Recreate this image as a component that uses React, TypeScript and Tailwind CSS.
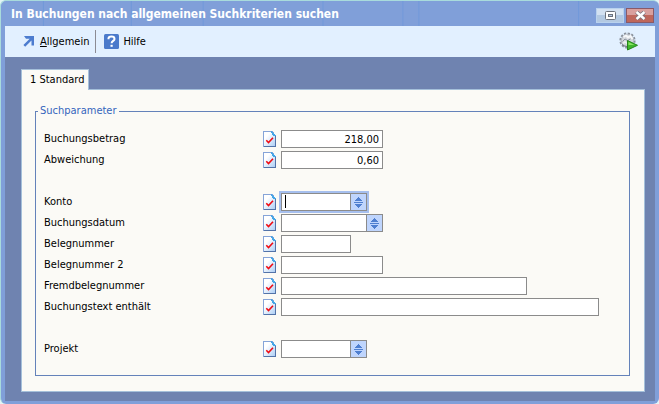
import { useState } from 'react';
import type { ReactNode } from 'react';

// Sheet with a red tick in front of every parameter
const CheckSheet = () => (
  <svg className="block h-4 w-[13px]" viewBox="0 0 13 16" shapeRendering="crispEdges">
    <defs>
      <linearGradient id="sheet" x1="0" y1="0" x2="1" y2="1">
        <stop offset="0.3" stopColor="#ffffff" />
        <stop offset="1" stopColor="#a9ccf5" />
      </linearGradient>
    </defs>
    <path d="M0.5 0.5h8.5l3.5 4v11h-12z" fill="url(#sheet)" stroke="#86a4d8" />
    <path d="M12.5 5v10.5h-12" fill="none" stroke="#5373a8" />
    <path d="M8 0h1v1h1v1h1v1h1v1h1v1h-3v-1h-1v-2h-1z" fill="#45a6e6" />
    <path d="M3.3 9.300l2.200 2.200l4.500-4.700" fill="none" stroke="#f00a12" strokeWidth={1.600} shapeRendering="auto" />
  </svg>
);

const ArrowIcon = () => (
  <svg className="block h-[11px] w-[11px]" viewBox="0 0 11 11" fill="#4c7ccf">
    <path d="M1 0h10v9.500h-2.500v-5l-6.300 6.300l-1.800-1.800l6.300-6.300h-3.700z" />
  </svg>
);

const HelpIcon = () => (
  <svg className="block h-[15px] w-[15px]" viewBox="0 0 15 15">
    <rect width="15" height="15" rx="1.500" fill="#4a7acb" />
    <path d="M4.500 5.200V4.500C4.500 3 5.700 2.500 7.500 2.500S10.500 3.200 10.500 4.900C10.500 6.800 7.600 7 7.600 9.300" fill="none" stroke="#fff" strokeWidth={2} />
    <rect x="6.500" y="10.800" width="2.200" height="2" fill="#fff" />
  </svg>
);

// Gear with a green play arrow, starts the search
const RunIcon = () => (
  <svg className="block h-[19px] w-[20px]" viewBox="0 0 20 19">
    <circle cx="8.500" cy="8.500" r="7" fill="none" stroke="#8b919b" strokeWidth={2.200} strokeDasharray="2.200 1.465" />
    <circle cx="8.500" cy="8.500" r="6.200" fill="#d3d7dd" stroke="#a9afb9" strokeWidth={0.800} />
    <path d="M4.500 5l2.500-1.500l2 2l2.500-1.500l2 3" fill="none" stroke="#f6f8fa" strokeWidth={2} />
    <path d="M3.500 9.500l2.500-2.500l2.500 1.500l3-1.500" fill="none" stroke="#8e95a1" strokeWidth={1} />
    <path d="M4 11.500l2-1.500l2 1.500" fill="none" stroke="#eef1f4" strokeWidth={1.500} />
    <path d="M3 12.500l2.500 1.500l2.500 0.500" fill="none" stroke="#717985" strokeWidth={1} />
    <path d="M8.500 8.500v9.500l10-4.700z" fill="#3fb62b" stroke="#24861a" strokeWidth={1} />
    <path d="M9.500 10l6 3h-6z" fill="#8ae263" />
  </svg>
);

const SpinIcon = () => (
  <svg className="block h-[11px] w-[9px]" viewBox="0 0 9 11" fill="#4f7fd0" shapeRendering="crispEdges">
    <path d="M4 0h1v1h1v1h1v1h1v1h-7v-1h1v-1h1v-1h1z" />
    <path d="M0 5h9v1h-9z" />
    <path d="M1 7h7v1h-1v1h-1v1h-1v1h-1v-1h-1v-1h-1v-1h-1z" />
  </svg>
);

// Thin vertical streaks in the title bar
const TitleStreaks = () => (
  <svg className="absolute inset-0 h-full w-full" viewBox="0 0 659 25" preserveAspectRatio="none">
    <path d="M42.500 0v25M130.500 0v25M202.500 0v25M322.500 0v25M402.500 0v25M418.500 0v25M578.500 0v25" stroke="#7099da" strokeWidth={1} />
  </svg>
);

interface FieldProps {
  id: string;
  label: string;
  width: string;
  value?: string;
  spin?: boolean;
  active?: boolean;
  spaced?: boolean;
}

const Field = ({ id, label, width, value = '', spin = false, active = false, spaced = false }: FieldProps) => {
  const [text, setText] = useState(value);

  return (
    <div className={`flex items-center ${spaced ? 'mt-[21px]' : ''}`}>
      <label htmlFor={id} className="w-[219px] shrink-0">{label}</label>
      <CheckSheet />
      <div
        className={`relative ml-[5px] flex h-[18px] border border-[#8b8b8b] bg-white ${width} ${
          active ? 'ring-2 ring-[#a6bfee]' : ''
        }`}
      >
        <input
          id={id}
          type="text"
          value={text}
          onChange={(e) => setText(e.target.value)}
          className={`h-full w-full min-w-0 bg-transparent px-[3px] outline-none ${value ? 'text-right' : ''}`}
        />
        {active && <span className="absolute left-[3px] top-px h-[13px] w-px bg-black" />}
        {spin && (
          <button
            type="button"
            aria-label={`${label} wählen`}
            className="flex w-4 shrink-0 items-center justify-center border-l border-[#8b8b8b] bg-[#bfd5fd]"
          >
            <SpinIcon />
          </button>
        )}
      </div>
    </div>
  );
};

const ToolButton = ({ icon, children }: { icon: ReactNode; children: ReactNode }) => (
  <button type="button" className="flex items-center gap-1">
    {icon}
    <span>{children}</span>
  </button>
);

const fields: FieldProps[] = [
  { id: 'betrag', label: 'Buchungsbetrag', width: 'w-[102px]', value: '218,00' },
  { id: 'abweichung', label: 'Abweichung', width: 'w-[102px]', value: '0,60' },
  { id: 'konto', label: 'Konto', width: 'w-[86px]', spin: true, active: true, spaced: true },
  { id: 'datum', label: 'Buchungsdatum', width: 'w-[102px]', spin: true },
  { id: 'beleg', label: 'Belegnummer', width: 'w-[70px]' },
  { id: 'beleg2', label: 'Belegnummer 2', width: 'w-[102px]' },
  { id: 'fremdbeleg', label: 'Fremdbelegnummer', width: 'w-[246px]' },
  { id: 'text', label: 'Buchungstext enthält', width: 'w-[318px]' },
  { id: 'projekt', label: 'Projekt', width: 'w-[86px]', spin: true, spaced: true },
];

const App = () => {
  return (
    <div className="bg-[#e4f4f6]">
      <div className="flex min-h-screen flex-col overflow-hidden rounded-md border-l border-t border-[#a9dbdc] bg-[#809fd9] pb-[3px] pl-1 pr-1 font-['DejaVu_Sans_Condensed','DejaVu_Sans',sans-serif] text-[11px] leading-4 text-black">
        <header className="relative -mx-1 flex h-[25px] items-center justify-between pl-[10px] pr-[5px]">
          <TitleStreaks />
          <h1 className="relative text-[12px] font-bold text-white">
            In Buchungen nach allgemeinen Suchkriterien suchen
          </h1>
          <div className="relative mt-[3px] flex gap-[2px]">
            <button
              type="button"
              aria-label="Maximieren"
              className="flex h-[15px] w-7 items-center justify-center border border-[#b9d2ee] bg-linear-to-b from-[#d3e1f1] from-50% to-[#b3c9e2] to-50%"
            >
              <svg className="h-[9px] w-[11px]" viewBox="0 0 11 9" fill="none">
                <rect x="0.500" y="0.500" width="10" height="8" rx="1" fill="#fff" stroke="#6d727c" />
                <rect x="3.500" y="3.500" width="4" height="2" fill="#b4c8e0" stroke="#6d727c" />
              </svg>
            </button>
            <button
              type="button"
              aria-label="Schließen"
              className="flex h-[15px] w-7 items-center justify-center border border-[#8a5a68] bg-linear-to-b from-[#d9a09e] from-50% to-[#bf675c] to-50%"
            >
              <svg className="h-[9px] w-[11px]" viewBox="0 0 11 9" fill="none">
                <path d="M1.500 1l8 7M9.500 1l-8 7" stroke="#77737c" strokeWidth={4} />
                <path d="M1.500 1l8 7M9.500 1l-8 7" stroke="#fff" strokeWidth={2.400} />
              </svg>
            </button>
          </div>
        </header>

        <div className="flex h-[31px] items-center bg-[#e2f0ff] pl-[18px] pr-4">
          <ToolButton icon={<ArrowIcon />}>
            <span className="pl-[2px]"><span className="underline">A</span>llgemein</span>
          </ToolButton>
          <div className="ml-[6px] mr-2 h-[23px] w-px bg-[#8b8b93]" />
          <ToolButton icon={<HelpIcon />}>Hilfe</ToolButton>
          <button type="button" aria-label="Suche starten" className="ml-auto">
            <RunIcon />
          </button>
        </div>

        <main className="flex flex-1 flex-col bg-[#6f83b0] pb-[9px] pl-4 pr-[10px] pt-3">
          <div role="tablist" className="flex">
            <button
              type="button"
              role="tab"
              aria-selected="true"
              className="relative z-10 -mb-px h-[21px] border border-b-0 border-[#a5c0da] bg-[#fbfaf6] pl-2 pr-1"
            >
              1 Standard
            </button>
          </div>
          <form className="flex flex-1 flex-col border border-[#a5c0da] bg-[#fbfaf6] pb-[15px] pl-[13px] pr-[14px] pt-[13px]">
            <fieldset className="min-w-0 flex-1 border border-solid border-[#6482ba] pb-4 pl-2">
              <legend className="-ml-[6px] px-[2px] text-[#3465bd]">Suchparameter</legend>
              <div className="flex flex-col gap-[3px] pt-[11px]">
                {fields.map((field) => (
                  <Field key={field.id} {...field} />
                ))}
              </div>
            </fieldset>
          </form>
        </main>
      </div>
    </div>
  );
};

export default App;
